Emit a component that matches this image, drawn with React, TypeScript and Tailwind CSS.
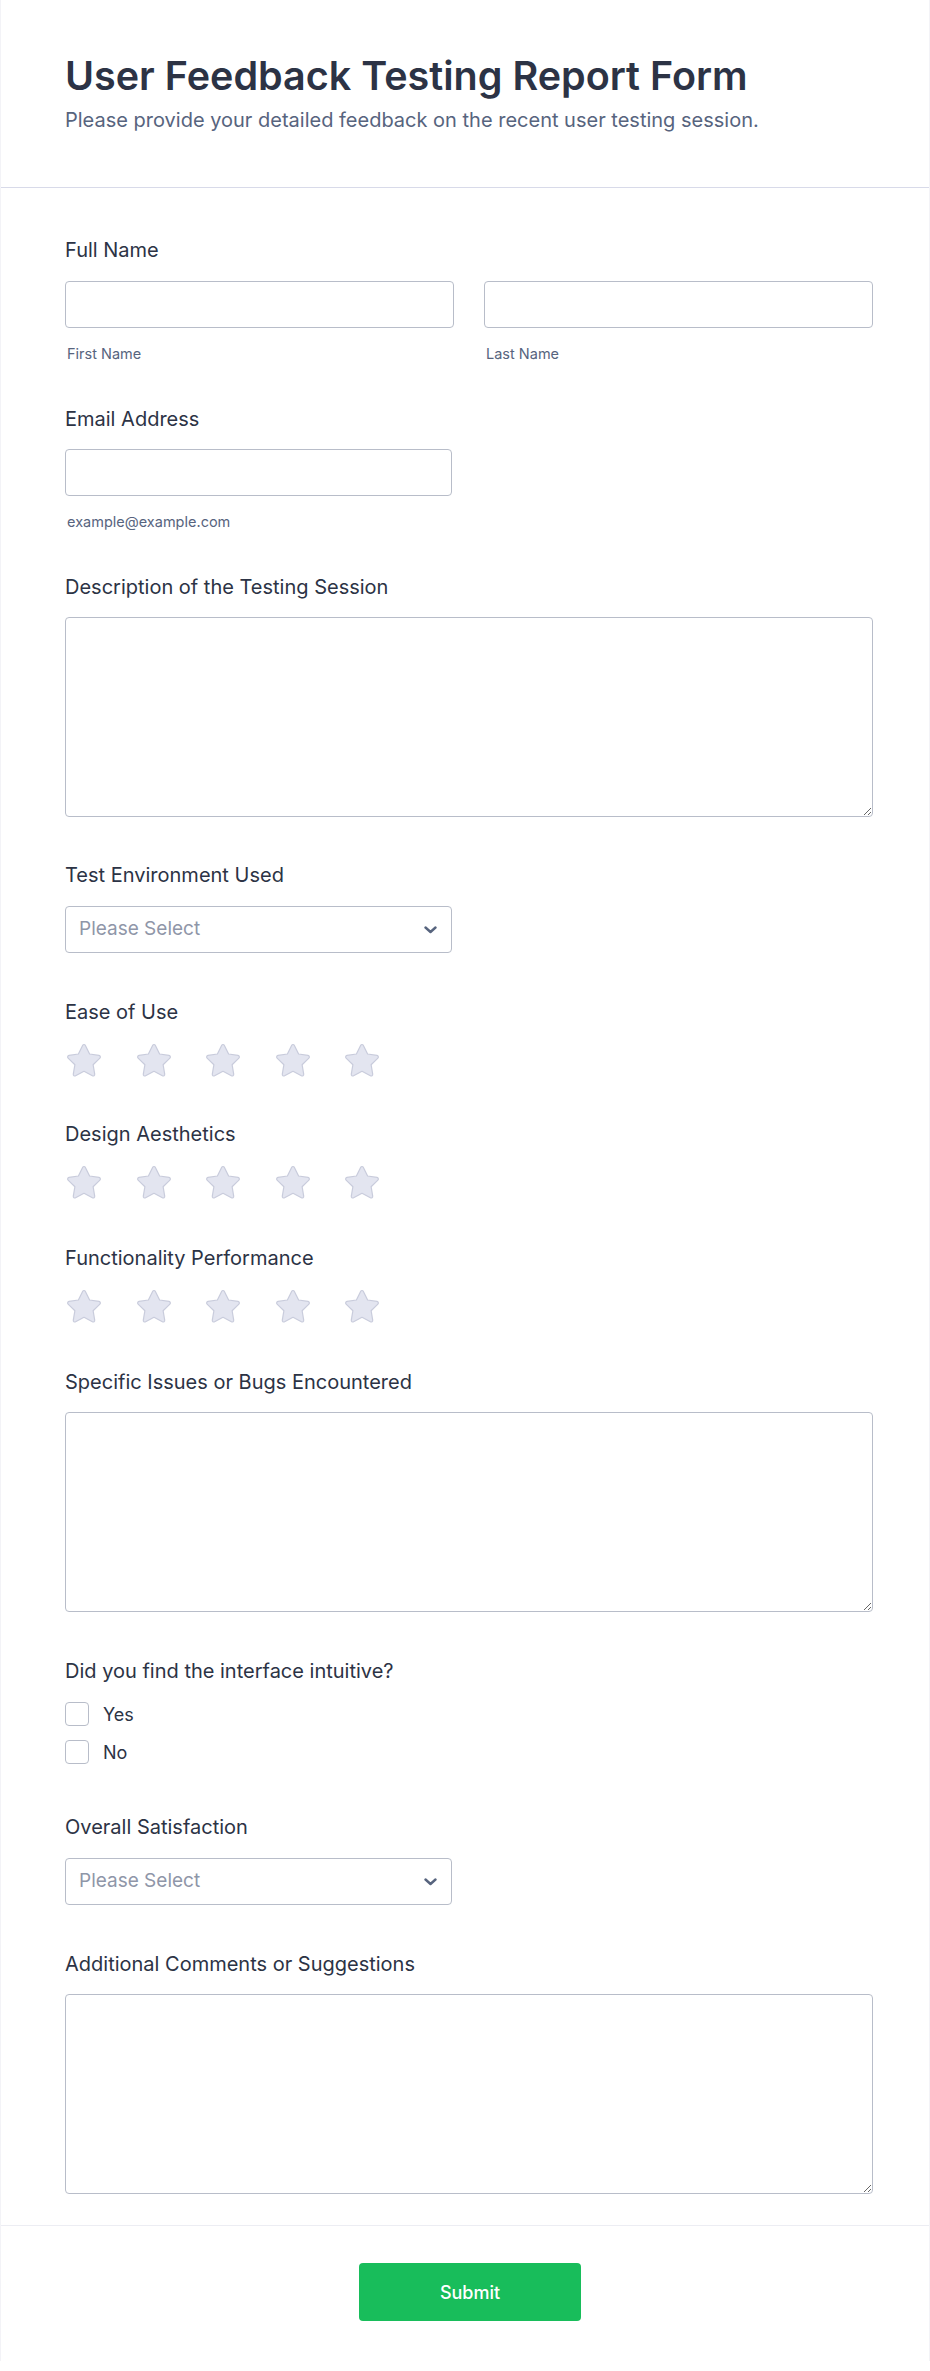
import React from "react";

const font = { fontFamily: "Inter, 'Noto Sans', sans-serif" };

function Label({ children }: { children: React.ReactNode }) {
  return (
    <label className="block text-[20px] leading-[24px] font-normal text-[#2c3345]">
      {children}
    </label>
  );
}

function Star() {
  return (
    <svg width="38" height="36" viewBox="0 0 38 36" className="shrink-0">
      <path
        d="M19 2.5c.6 0 1.1.3 1.4.9l4.2 8.6 9.4 1.4c1.3.2 1.8 1.8.9 2.7l-6.8 6.6 1.6 9.4c.2 1.3-1.1 2.3-2.3 1.7L19 29.3l-8.4 4.5c-1.2.6-2.5-.4-2.3-1.7l1.6-9.4-6.8-6.6c-.9-.9-.4-2.5.9-2.7l9.4-1.4 4.2-8.6c.3-.6.8-.9 1.4-.9z"
        fill="#e3e5f0"
        stroke="#c9ccdc"
        strokeWidth="1.2"
        strokeLinejoin="round"
      />
    </svg>
  );
}

function Stars() {
  return (
    <div className="mt-[18px] flex gap-[31.5px]">
      {[0, 1, 2, 3, 4].map((i) => (
        <Star key={i} />
      ))}
    </div>
  );
}

function Select() {
  return (
    <div className="mt-[19px] w-[387px] h-[47px] border border-[#b8bdc9] rounded-[4px] bg-white flex items-center justify-between pl-[13px] pr-[14px]">
      <span className="text-[19px] text-[#8f96a8]">Please Select</span>
      <svg width="13" height="8" viewBox="0 0 13 8">
        <path d="M1.5 1.5l5 4.5 5-4.5" fill="none" stroke="#57647e" strokeWidth="2.4" strokeLinecap="round" strokeLinejoin="round" />
      </svg>
    </div>
  );
}

function TextArea() {
  return (
    <textarea className="mt-[18px] block w-full h-[200px] border border-[#b8bdc9] rounded-[4px] bg-white outline-none resize-y" />
  );
}

function Check({ label }: { label: string }) {
  return (
    <div className="flex items-center gap-[14px] h-[24px]">
      <span className="w-[24px] h-[24px] border border-[#b8bdc9] rounded-[4px] bg-white" />
      <span className="text-[18px] text-[#2c3345]">{label}</span>
    </div>
  );
}

export default function App() {
  return (
    <div className="w-full bg-white overflow-hidden" style={font}>
      <div className="border-x border-[#f3f3f7]">
        {/* Header */}
        <div className="pl-16 pr-[56px] pt-[52px] pb-[55px] border-b border-[#d8dae9]">
          <h1 className="text-[39.5px] leading-[48px] font-semibold text-[#2c3345]">
            User Feedback Testing Report Form
          </h1>
          <p className="mt-2 text-[20px] leading-[24px] text-[#57647e]">
            Please provide your detailed feedback on the recent user testing session.
          </p>
        </div>

        {/* Body */}
        <div className="pl-16 pr-[56px] pt-[50px] pb-[31px] flex flex-col">
          <div>
            <Label>Full Name</Label>
            <div className="mt-[19px] grid grid-cols-2 gap-[30px]">
              <div>
                <div className="h-[47px] border border-[#b8bdc9] rounded-[4px]" />
                <div className="mt-[17px] text-[14.5px] leading-[18px] text-[#57647e] pl-[2px]">First Name</div>
              </div>
              <div>
                <div className="h-[47px] border border-[#b8bdc9] rounded-[4px]" />
                <div className="mt-[17px] text-[14.5px] leading-[18px] text-[#57647e] pl-[2px]">Last Name</div>
              </div>
            </div>
          </div>

          <div className="mt-[44px]">
            <Label>Email Address</Label>
            <div className="mt-[18px] w-[387px] h-[47px] border border-[#b8bdc9] rounded-[4px]" />
            <div className="mt-[17px] text-[14.5px] leading-[18px] text-[#57647e] pl-[2px]">example@example.com</div>
          </div>

          <div className="mt-[44px]">
            <Label>Description of the Testing Session</Label>
            <TextArea />
          </div>

          <div className="mt-[46px]">
            <Label>Test Environment Used</Label>
            <Select />
          </div>

          <div className="mt-[47px]">
            <Label>Ease of Use</Label>
            <Stars />
          </div>

          <div className="mt-[44px]">
            <Label>Design Aesthetics</Label>
            <Stars />
          </div>

          <div className="mt-[46px]">
            <Label>Functionality Performance</Label>
            <Stars />
          </div>

          <div className="mt-[46px]">
            <Label>Specific Issues or Bugs Encountered</Label>
            <TextArea />
          </div>

          <div className="mt-[47px]">
            <Label>Did you find the interface intuitive?</Label>
            <div className="mt-[19px] flex flex-col gap-[14px]">
              <Check label="Yes" />
              <Check label="No" />
            </div>
          </div>

          <div className="mt-[51px]">
            <Label>Overall Satisfaction</Label>
            <Select />
          </div>

          <div className="mt-[47px]">
            <Label>Additional Comments or Suggestions</Label>
            <TextArea />
          </div>
        </div>

        {/* Footer */}
        <div className="border-t border-[#ecedf3] pt-[37px] pb-[40px] pl-[10px] flex justify-center">
          <button className="w-[222px] h-[58px] rounded-[4px] bg-[#18bd5b] text-white text-[18px] font-medium">
            Submit
          </button>
        </div>
      </div>
    </div>
  );
}
